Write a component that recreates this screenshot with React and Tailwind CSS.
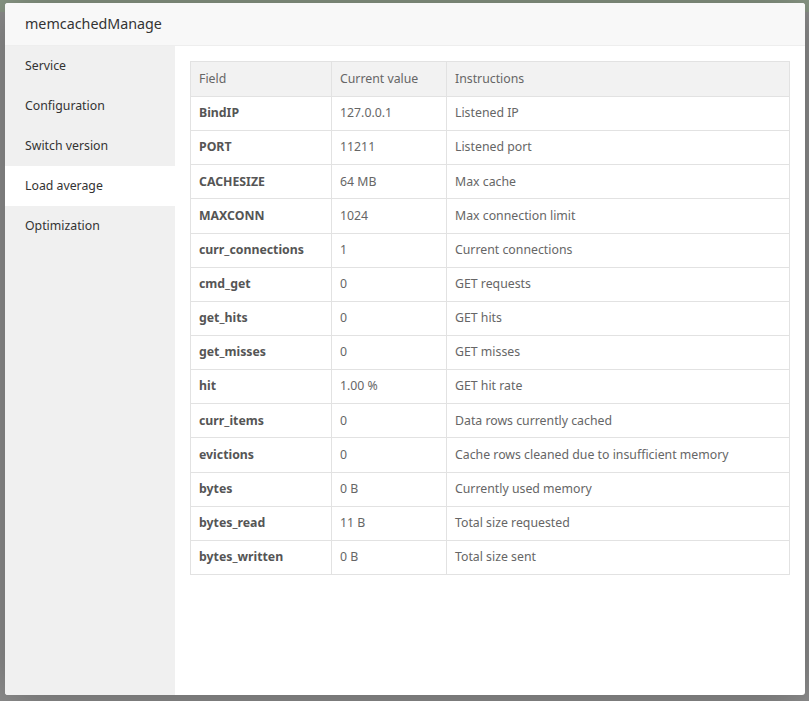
import React from "react";

const rows = [
  ["BindIP", "127.0.0.1", "Listened IP"],
  ["PORT", "11211", "Listened port"],
  ["CACHESIZE", "64 MB", "Max cache"],
  ["MAXCONN", "1024", "Max connection limit"],
  ["curr_connections", "1", "Current connections"],
  ["cmd_get", "0", "GET requests"],
  ["get_hits", "0", "GET hits"],
  ["get_misses", "0", "GET misses"],
  ["hit", "1.00 %", "GET hit rate"],
  ["curr_items", "0", "Data rows currently cached"],
  ["evictions", "0", "Cache rows cleaned due to insufficient memory"],
  ["bytes", "0 B", "Currently used memory"],
  ["bytes_read", "11 B", "Total size requested"],
  ["bytes_written", "0 B", "Total size sent"],
];

const menu = ["Service", "Configuration", "Switch version", "Load average", "Optimization"];

export default function App() {
  return (
    <div
      className="w-[809px] h-[701px] overflow-hidden bg-[linear-gradient(to_bottom,#8a9886_0px,#8a9886_12px,#8e8e8e_12px)] pt-[3px] pl-[5px]"
      style={{ fontFamily: '"Noto Sans", "Open Sans", sans-serif' }}
    >
      <div className="w-[800px] h-[692px] bg-white rounded-[3px] overflow-hidden flex flex-col shadow-[1px_1px_50px_rgba(0,0,0,0.3)]">
        <div className="h-[43px] shrink-0 bg-[#f8f8f8] border-b border-[#eeeeee] flex items-center px-5 text-[14.3px] text-[#333]">
          memcachedManage
        </div>
        <div className="flex flex-1 min-h-0">
          <div className="w-[170px] shrink-0 bg-[#f0f0f0]">
            {menu.map((m) => (
              <div
                key={m}
                className={`h-[40px] flex items-center px-5 text-[12.3px] text-[#333] ${m === "Load average" ? "bg-white" : ""}`}
              >
                {m}
              </div>
            ))}
          </div>
          <div className="flex-1 p-[15px]">
            <table className="w-[600px] border-collapse text-[12.3px] text-[#666] table-fixed">
              <colgroup>
                <col className="w-[141px]" />
                <col className="w-[115px]" />
                <col />
              </colgroup>
              <thead>
                <tr className="bg-[#f2f2f2] h-[35px]">
                  <th className="border border-[#e2e2e2] px-2 text-left font-normal">Field</th>
                  <th className="border border-[#e2e2e2] px-2 text-left font-normal">Current value</th>
                  <th className="border border-[#e2e2e2] px-2 text-left font-normal">Instructions</th>
                </tr>
              </thead>
              <tbody>
                {rows.map((r) => (
                  <tr key={r[0]} className="h-[34.15px]">
                    <td className="border border-[#e2e2e2] px-2 font-bold text-[#555]">{r[0]}</td>
                    <td className="border border-[#e2e2e2] px-2">{r[1]}</td>
                    <td className="border border-[#e2e2e2] px-2">{r[2]}</td>
                  </tr>
                ))}
              </tbody>
            </table>
          </div>
        </div>
      </div>
    </div>
  );
}
